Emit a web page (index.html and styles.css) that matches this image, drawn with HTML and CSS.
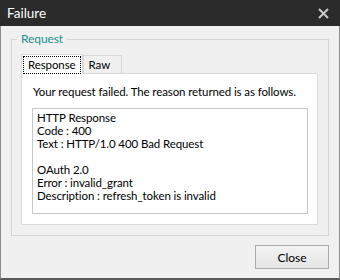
FILE: index.html
```html
<!DOCTYPE html>
<html lang="en">
<head>
    <meta charset="UTF-8">
    <meta name="viewport" content="width=device-width, initial-scale=1.0">
    <title>Failure</title>
    <link rel="stylesheet" href="styles.css">
</head>
<body>
    <div class="window">
        <div class="titlebar">
            <span class="title">Failure</span>
            <svg class="close-x" width="11" height="11" viewBox="0 0 11 11">
                <path d="M1 1 L10 10 M10 1 L1 10" stroke="#c9c9c9" stroke-width="2" fill="none"/>
            </svg>
        </div>

        <div class="content">
            <fieldset class="group">
                <legend>Request</legend>

                <div class="tabs">
                    <div class="tab active"><span class="focus">Response</span></div>
                    <div class="tab">Raw</div>
                </div>

                <div class="tab-page">
                    <p class="intro">Your request failed. The reason returned is as follows.</p>
                    <div class="details">
                        <div>HTTP Response</div>
                        <div>Code : 400</div>
                        <div>Text : HTTP/1.0 400 Bad Request</div>
                        <div>&nbsp;</div>
                        <div>OAuth 2.0</div>
                        <div>Error : invalid_grant</div>
                        <div>Description : refresh_token is invalid</div>
                    </div>
                </div>
            </fieldset>

            <div class="button-row">
                <button type="button">Close</button>
            </div>
        </div>
    </div>
</body>
</html>
```

FILE: styles.css
```css
body {
    margin: 0;
    font-family: Lato, "Noto Sans", sans-serif;
    font-size: 11.5px;
    letter-spacing: -0.1px;
    color: #000;
}

.window {
    width: 340px;
    height: 280px;
    box-sizing: border-box;
    background-color: #f0f0f0;
    border-left: 1px solid #8c8c8c;
    border-right: 1px solid #8c8c8c;
    border-bottom: 2px solid #5a5a5a;
}

.titlebar {
    height: 26px;
    margin: 0 -1px;
    background-color: #2b2b2b;
    display: flex;
    align-items: center;
    justify-content: space-between;
    padding: 0 11px 0 7px;
}

.title {
    color: #fff;
    font-size: 13.5px;
    letter-spacing: 0;
}

.content {
    padding: 0 10px;
}

.group {
    margin: 5px 0 0 0;
    padding: 7px 10px 10px 5px;
    border: 1px solid #d5d5d5;
}

.group legend {
    padding: 0 4px;
    color: #1a9090;
    font-size: 12px;
    line-height: 16px;
}

.tabs {
    display: flex;
    align-items: flex-end;
    margin-left: 4px;
    height: 19px;
}

.tab {
    height: 18px;
    line-height: 17px;
    padding: 0 11px 0 5px;
    border: 1px solid #d9d9d9;
    border-bottom: none;
    background-color: #f0f0f0;
    box-sizing: border-box;
}

.tab.active {
    height: 20px;
    padding: 1px;
    background-color: #fff;
    margin-bottom: -1px;
    position: relative;
}

.tab .focus {
    display: block;
    border: 1px dotted #000;
    padding: 0 4px;
    line-height: 16px;
}

.tab-page {
    margin-left: 4px;
    height: 152px;
    box-sizing: border-box;
    border: 1px solid #d9d9d9;
    background-color: #fff;
    padding: 10px 9px 0 10px;
}

.intro {
    margin: 0 0 0 1px;
    line-height: 16px;
    white-space: nowrap;
}

.details {
    margin-top: 8px;
    height: 106px;
    box-sizing: border-box;
    border: 1px solid #c7c7c7;
    padding: 2px 4px;
    line-height: 13px;
    white-space: nowrap;
}

.button-row {
    display: flex;
    justify-content: flex-end;
    margin-top: 9px;
}

.button-row button {
    width: 74px;
    height: 24px;
    font-family: inherit;
    font-size: 12px;
    letter-spacing: 0;
    color: #000;
    background: linear-gradient(#f2f2f2, #e5e5e5);
    border: 1px solid #acacac;
    border-radius: 0;
}
```
